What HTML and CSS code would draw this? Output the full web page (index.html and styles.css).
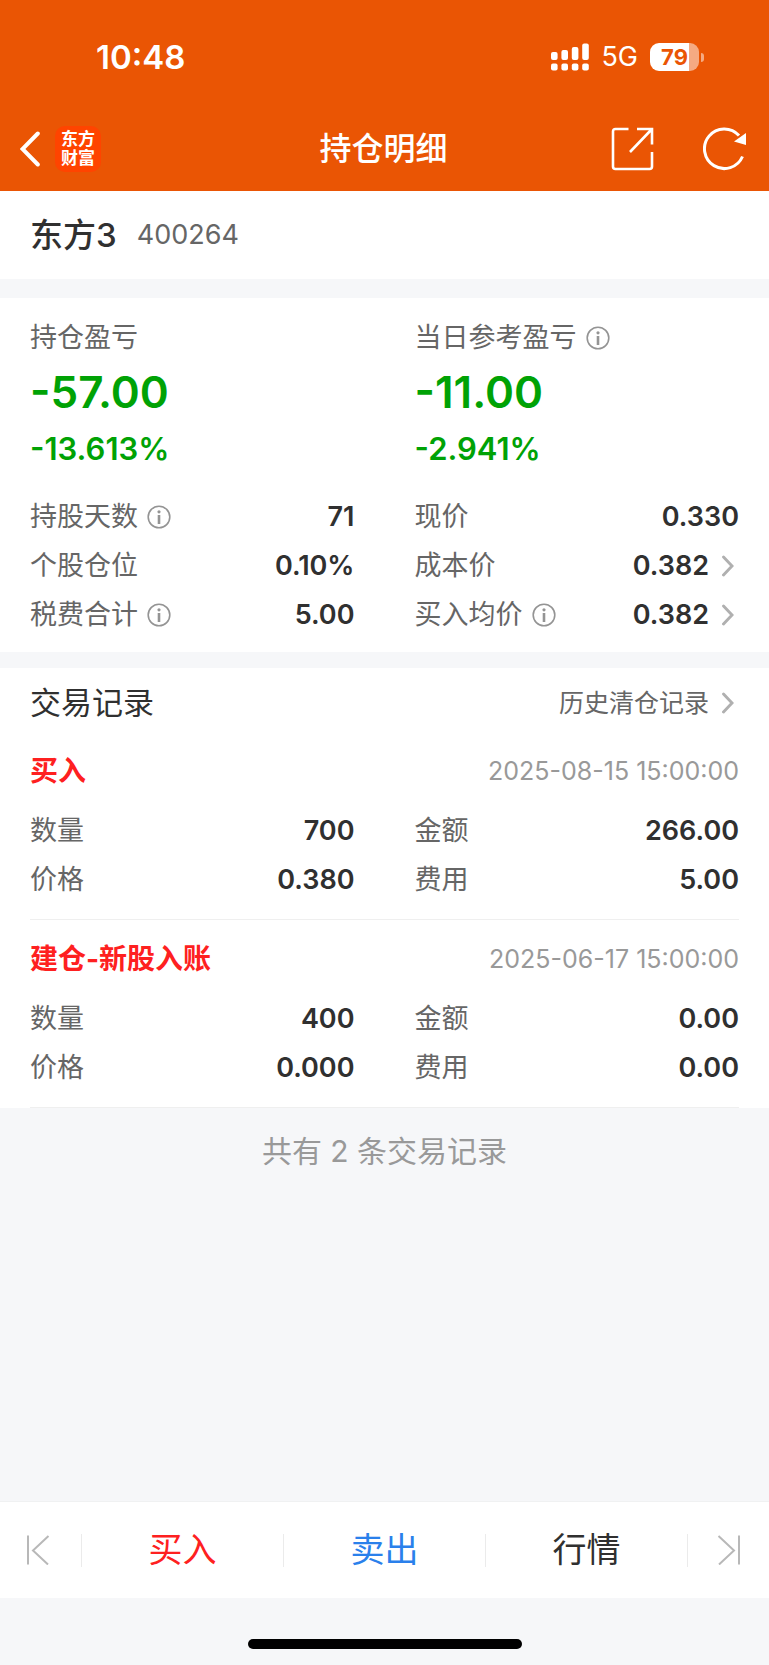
FILE: index.html
```html
<!DOCTYPE html>
<html lang="zh-CN">
<head>
<meta charset="utf-8">
<meta name="viewport" content="width=device-width, initial-scale=1">
<title>持仓明细</title>
<link rel="stylesheet" href="styles.css">
</head>
<body>
<svg class="defs" aria-hidden="true">
  <symbol id="info" viewBox="0 0 24 24">
    <circle cx="12" cy="12" r="10.8" fill="none" stroke="currentColor" stroke-width="1.6"/>
    <circle cx="12" cy="6.8" r="1.6" fill="currentColor"/>
    <path d="M12 10v9" fill="none" stroke="currentColor" stroke-width="2.6"/>
  </symbol>
  <symbol id="chevron" viewBox="0 0 12 22">
    <path d="M1.5 2 10 11 1.500 20" fill="none" stroke="currentColor" stroke-width="2.9" stroke-linecap="round"/>
  </symbol>
</svg>

<header class="top">
  <div class="status">
    <span class="clock">10:48</span>
    <div class="signals">
      <svg class="cell" viewBox="0 0 38 28" fill="#fff" aria-hidden="true">
        <rect x="0" y="9" width="6.6" height="8" rx="2"/><rect x="10.4" y="7" width="6.6" height="10" rx="2"/><rect x="20.8" y="4" width="6.6" height="13" rx="2"/><rect x="31.2" y="0.5" width="6.6" height="16.5" rx="2"/>
        <rect x="0" y="20.5" width="6.6" height="7" rx="2"/><rect x="10.4" y="20.5" width="6.6" height="7" rx="2"/><rect x="20.8" y="20.5" width="6.6" height="7" rx="2"/><rect x="31.2" y="20.5" width="6.6" height="7" rx="2"/>
      </svg>
      <span class="network">5G</span>
      <span class="battery"><span class="battery-body">79</span><span class="battery-tip"></span></span>
    </div>
  </div>
  <nav class="nav">
    <div class="nav-side">
      <button class="icon-button" type="button" aria-label="返回">
        <svg class="back" viewBox="0 0 20 36"><path d="M17.8 2.5 2.5 18 17.8 33.5" fill="none" stroke="#fff" stroke-width="4" stroke-linecap="round" stroke-linejoin="miter"/></svg>
      </button>
      <span class="logo"><span>东方</span><span>财富</span></span>
    </div>
    <h1 class="title">持仓明细</h1>
    <div class="nav-side nav-actions">
      <button class="icon-button" type="button" aria-label="分享">
        <svg class="action" viewBox="0 0 44 44" fill="none" stroke="#fff" stroke-width="2.600"><path d="M17.500 2H4.500Q2 2 2 4.500V39.500Q2 42 4.500 42H38.500Q41 42 41 39.500V25M26 2H41V17.500M41 2 19 25"/></svg>
      </button>
      <button class="icon-button" type="button" aria-label="刷新">
        <svg class="action" viewBox="0 0 44 44"><path d="M39.500 29.500A19.800 19.800 0 1 1 36 8.500" fill="none" stroke="#fff" stroke-width="3"/><path d="M43 6V18L31 14.500Z" fill="#fff"/></svg>
      </button>
    </div>
  </nav>
</header>

<main class="content">
  <section class="stock panel">
    <h2 class="stock-name">东方3</h2>
    <span class="stock-code">400264</span>
  </section>

  <section class="summary panel">
    <div class="pair">
      <div>
        <div class="label">持仓盈亏</div>
        <div class="profit">-57.00</div>
        <div class="percent">-13.613%</div>
      </div>
      <div>
        <div class="label">当日参考盈亏<button class="info" type="button" aria-label="当日参考盈亏说明"><svg><use href="#info"/></svg></button></div>
        <div class="profit">-11.00</div>
        <div class="percent">-2.941%</div>
      </div>
    </div>
    <dl class="pair facts">
      <div class="fact"><dt class="label">持股天数<button class="info" type="button" aria-label="持股天数说明"><svg><use href="#info"/></svg></button></dt><dd>71</dd></div>
      <div class="fact"><dt class="label">现价</dt><dd>0.330</dd></div>
      <div class="fact"><dt class="label">个股仓位</dt><dd>0.10%</dd></div>
      <div class="fact"><dt class="label">成本价</dt><dd><a class="more" href="#cost">0.382<svg class="chevron"><use href="#chevron"/></svg></a></dd></div>
      <div class="fact"><dt class="label">税费合计<button class="info" type="button" aria-label="税费合计说明"><svg><use href="#info"/></svg></button></dt><dd>5.00</dd></div>
      <div class="fact"><dt class="label">买入均价<button class="info" type="button" aria-label="买入均价说明"><svg><use href="#info"/></svg></button></dt><dd><a class="more" href="#average">0.382<svg class="chevron"><use href="#chevron"/></svg></a></dd></div>
    </dl>
  </section>

  <section class="records panel">
    <div class="records-head">
      <h2 class="records-title">交易记录</h2>
      <a class="more history" href="#history">历史清仓记录<svg class="chevron"><use href="#chevron"/></svg></a>
    </div>
    <article class="trade">
      <div class="trade-head"><h3 class="trade-type">买入</h3><time class="trade-time">2025-08-15 15:00:00</time></div>
      <dl class="pair facts">
        <div class="fact"><dt class="label">数量</dt><dd>700</dd></div>
        <div class="fact"><dt class="label">金额</dt><dd>266.00</dd></div>
        <div class="fact"><dt class="label">价格</dt><dd>0.380</dd></div>
        <div class="fact"><dt class="label">费用</dt><dd>5.00</dd></div>
      </dl>
    </article>
    <article class="trade">
      <div class="trade-head"><h3 class="trade-type">建仓-新股入账</h3><time class="trade-time">2025-06-17 15:00:00</time></div>
      <dl class="pair facts">
        <div class="fact"><dt class="label">数量</dt><dd>400</dd></div>
        <div class="fact"><dt class="label">金额</dt><dd>0.00</dd></div>
        <div class="fact"><dt class="label">价格</dt><dd>0.000</dd></div>
        <div class="fact"><dt class="label">费用</dt><dd>0.00</dd></div>
      </dl>
    </article>
  </section>
  <p class="total">共有 2 条交易记录</p>
</main>

<footer class="bottom">
  <div class="toolbar">
    <button class="tool" type="button" aria-label="上一只"><svg class="step" viewBox="0 0 24 30" fill="none" stroke="#b8b8b8" stroke-width="2"><path d="M2 0.500V29.500M22.500 1 7 15.500 22 29.500"/></svg></button>
    <button class="tool buy" type="button">买入</button>
    <button class="tool sell" type="button">卖出</button>
    <button class="tool" type="button">行情</button>
    <button class="tool" type="button" aria-label="下一只"><svg class="step" viewBox="0 0 24 30" fill="none" stroke="#b8b8b8" stroke-width="2"><path d="M22 0.500V29.500M1.500 1 17 15.500 2 29.500"/></svg></button>
  </div>
  <div class="home"><span class="home-bar"></span></div>
</footer>
</body>
</html>
```

FILE: styles.css
```css
* {
  box-sizing: border-box;
  margin: 0;
  padding: 0;
}

body {
  display: flex;
  flex-direction: column;
  min-height: 100vh;
  background: #f6f7f9;
  color: #303030;
  font-family: Inter, "Noto Sans CJK SC", sans-serif;
  font-size: 27px;
  line-height: 40px;
}

button {
  border: 0;
  background: none;
  color: inherit;
  font: inherit;
}

a {
  color: inherit;
  text-decoration: none;
}

svg {
  display: block;
}

.defs {
  position: absolute;
  width: 0;
  height: 0;
}

.top {
  background: #ea5504;
  color: #fff;
}

.status {
  display: flex;
  align-items: center;
  justify-content: space-between;
  height: 106px;
  padding: 8px 65px 0 96px;
}

.clock {
  font-size: 33px;
  font-weight: 600;
}

.signals {
  display: flex;
  align-items: center;
}

.cell {
  width: 38px;
  height: 28px;
}

.network {
  margin: 0 12px;
  font-size: 27px;
}

.battery {
  display: flex;
  align-items: center;
  gap: 2px;
}

.battery-body {
  width: 49px;
  height: 28px;
  border-radius: 9px;
  background: linear-gradient(90deg, #fff 79%, #f5aa82 79%);
  color: #ea5504;
  font-size: 22px;
  font-weight: 700;
  line-height: 28px;
  text-align: center;
}

.battery-tip {
  width: 3px;
  height: 9px;
  border-radius: 0 3px 3px 0;
  background: #f5aa82;
}

.nav {
  display: flex;
  align-items: center;
  height: 85px;
  padding: 0 22px 0 20px;
}

.nav-side {
  display: flex;
  flex: 1;
  align-items: center;
  gap: 15px;
}

.nav-actions {
  justify-content: flex-end;
  gap: 48px;
}

.back {
  width: 20px;
  height: 36px;
}

.action {
  width: 44px;
  height: 44px;
}

.logo {
  display: flex;
  flex-direction: column;
  align-items: center;
  justify-content: center;
  width: 46px;
  height: 46px;
  border-radius: 10px;
  background: #ff4400;
  font-size: 17px;
  font-weight: 700;
  line-height: 19px;
}

.title {
  font-size: 32px;
  font-weight: 500;
}

.panel {
  padding-right: 30px;
  padding-left: 30px;
  background: #fff;
}

.stock {
  display: flex;
  align-items: center;
  gap: 20px;
  height: 88px;
  margin-bottom: 19px;
}

.stock-name {
  font-size: 33px;
  font-weight: 500;
}

.stock-code {
  color: #666;
  font-size: 27px;
}

.summary {
  margin-bottom: 16px;
  padding-top: 20px;
  padding-bottom: 13px;
}

.pair {
  display: grid;
  grid-template-columns: 1fr 1fr;
  column-gap: 60px;
}

.label {
  display: flex;
  align-items: center;
  color: #666;
}

.info {
  margin-left: 9px;
  color: #949494;
}

.info svg {
  width: 24px;
  height: 24px;
}

.profit,
.percent {
  color: #00a205;
  font-weight: 600;
}

.profit {
  font-size: 44px;
  line-height: 68px;
}

.percent {
  font-size: 31px;
  line-height: 46px;
}

.summary .facts {
  margin-top: 20px;
}

.fact {
  display: flex;
  align-items: center;
  justify-content: space-between;
  height: 49px;
}

.fact dd {
  font-weight: 600;
}

.more {
  display: flex;
  align-items: center;
  gap: 13px;
  padding-right: 5px;
}

.chevron {
  width: 12px;
  height: 22px;
  color: #b0b0b0;
}

.records-head {
  display: flex;
  align-items: center;
  justify-content: space-between;
  height: 64px;
  padding-top: 6px;
}

.records-title {
  font-size: 31px;
  font-weight: 400;
}

.history {
  color: #666;
  font-size: 25px;
}

.trade {
  padding: 9px 0 15px;
  border-bottom: 1px solid #efefef;
}

.trade-head {
  display: flex;
  align-items: center;
  justify-content: space-between;
  height: 60px;
  margin-bottom: 5px;
}

.trade-type {
  color: #fe2020;
  font-size: 28px;
  font-weight: 700;
}

.trade-time {
  color: #999;
  font-size: 25px;
}

.total {
  color: #999;
  font-size: 30px;
  line-height: 86px;
  text-align: center;
}

.bottom {
  margin-top: auto;
}

.toolbar {
  display: grid;
  grid-template-columns: 81px 1fr 1fr 1fr 82px;
  align-items: center;
  height: 97px;
  border-top: 1px solid #f0f1f2;
  background: #fff;
}

.tool {
  display: flex;
  align-items: center;
  justify-content: center;
  height: 33px;
  font-size: 34px;
}

.tool:first-child {
  padding-right: 5px;
}

.tool + .tool {
  border-left: 1px solid #ebebeb;
}

.buy {
  color: #fe2020;
}

.sell {
  color: #2a80eb;
}

.step {
  width: 24px;
  height: 30px;
}

.home {
  display: flex;
  align-items: flex-end;
  justify-content: center;
  height: 67px;
  padding-bottom: 16px;
}

.home-bar {
  width: 274px;
  height: 10px;
  border-radius: 5px;
  background: #000;
}
```
